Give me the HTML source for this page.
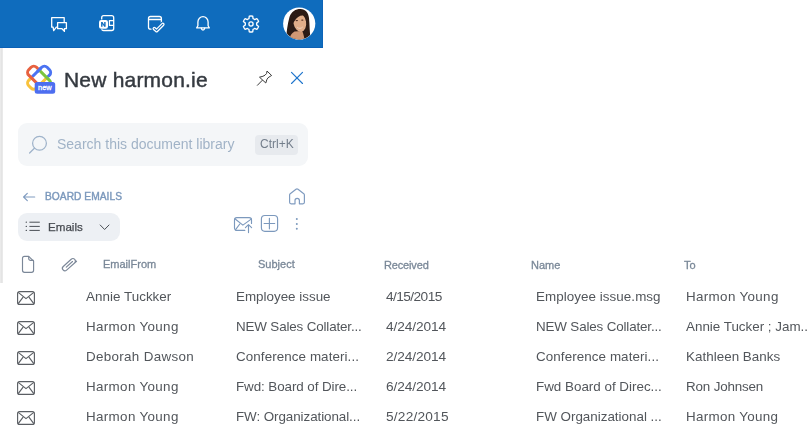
<!DOCTYPE html>
<html><head><meta charset="utf-8">
<style>
html,body{margin:0;padding:0;background:#fff;width:809px;height:440px;overflow:hidden;position:relative;font-family:"Liberation Sans",sans-serif;}
.a{position:absolute;white-space:nowrap;line-height:1;will-change:transform;}
svg{position:absolute;overflow:visible;}
#bar{position:absolute;left:0;top:0;width:322px;height:47px;background:#0f6cbd;border-right:1px solid #0c64b8;border-bottom:1px solid #0a60b6;}
#lline{position:absolute;left:0;top:48px;width:3px;height:235px;background:linear-gradient(to right,#ededed 0px,#e4e4e4 1.5px,#e9e9e9 2.5px,#f3f3f3 3px);}
.row{color:#52565b;font-size:13.4px;margin-top:-0.4px;}
.dt{font-size:13.7px;margin-top:0px;}
.hd{color:#7a8898;font-size:11px;-webkit-text-stroke:0.3px #7a8898;}
</style></head><body>
<div id="bar"></div>
<div id="lline"></div>

<!-- top bar icons -->
<svg width="809" height="48" style="left:0;top:0" fill="none" stroke="#fff" stroke-width="1.3" stroke-linejoin="round" stroke-linecap="round">
  <!-- chat -->
  <path d="M64.2,21.6 V17.7 H51.7 V27.2 H53.1 L53.7,30.6 L56.3,27.2 H57.5"/>
  <path d="M62,28.7 H57.6 V22.6 H66.4 V28.7 H64.4 V31.4 Z"/>
  <!-- onenote -->
  <rect x="101.7" y="15.7" width="12" height="14.8" rx="2"/>
  <path d="M109.4,20.6 H113.5 M109.4,20.6 V25.4 H113.5"/>
  <rect x="98.6" y="19.6" width="9.8" height="9.6" rx="2.4" fill="#0f6cbd" stroke="none"/>
  <rect x="99" y="20" width="9" height="8.8" rx="2.2" fill="#fff" stroke="none"/>
  <path d="M101.1,26.7 V22 H102.5 L104.2,24.7 V22 H105.6 V26.7 H104.2 L102.5,24 V26.7 Z" fill="#0f6cbd" stroke="none"/>
  <!-- calendar check -->
  <path d="M153,29.2 H150.5 A2,2 0 0 1 148.5,27.2 V18.5 A2,2 0 0 1 150.5,16.5 H159.4 A2,2 0 0 1 161.4,18.5 V23.5"/>
  <path d="M148.6,19.5 H161.3"/>
  <path d="M154.3,28.6 L156.6,30.7 L162.8,24.4" stroke="#0f6cbd" stroke-width="5.6"/>
  <path d="M154.3,28.6 L156.6,30.7 L162.8,24.4" stroke-width="3.6"/>
  <path d="M154.3,28.6 L156.6,30.7 L162.8,24.4" stroke="#0f6cbd" stroke-width="1.1"/>
  <!-- bell -->
  <path d="M197.9,25.8 V21.9 A5.1,5.2 0 0 1 208.1,21.9 V25.8 L209.3,27.9 H196.7 Z"/>
  <path d="M201.3,28.2 A1.75,2.5 0 0 0 204.7,28.2"/>
  <!-- gear -->
  <path d="M248.96,18.68 L249.27,16.19 A8.0,8.0 0 0 1 252.73,16.19 L253.04,18.68 A5.7,5.7 0 0 1 254.59,19.57 L256.90,18.60 A8.0,8.0 0 0 1 258.63,21.59 L256.63,23.11 A5.7,5.7 0 0 1 256.63,24.89 L258.63,26.41 A8.0,8.0 0 0 1 256.90,29.40 L254.59,28.43 A5.7,5.7 0 0 1 253.04,29.32 L252.73,31.81 A8.0,8.0 0 0 1 249.27,31.81 L248.96,29.32 A5.7,5.7 0 0 1 247.41,28.43 L245.10,29.40 A8.0,8.0 0 0 1 243.37,26.41 L245.37,24.89 A5.7,5.7 0 0 1 245.37,23.11 L243.37,21.59 A8.0,8.0 0 0 1 245.10,18.60 L247.41,19.57 A5.7,5.7 0 0 1 248.96,18.68 Z"/>
  <circle cx="251" cy="24" r="2.1"/>
</svg>
<!-- avatar -->
<svg width="40" height="40" style="left:279px;top:4px" viewBox="279 4 40 40">
  <defs><clipPath id="cc"><circle cx="299.2" cy="23.6" r="15.9"/></clipPath></defs>
  <circle cx="299.2" cy="23.6" r="16.1" fill="#fff"/>
  <g clip-path="url(#cc)">
    <path d="M286,40 C286.5,32 287.5,24 289.5,17 C291.5,11.5 295.5,9 300.5,9 C305.5,9.2 308.3,12.5 309,18 C309.8,25 309.3,32 311,40 Z" fill="#2b1b15"/>
    <path d="M289,40 C290,36 291.5,33 294.5,31.5 L302,31 C303.5,33 304,37 304.5,40 Z" fill="#cf9874"/>
    <ellipse cx="299.8" cy="22.6" rx="6.3" ry="9.3" transform="rotate(-10 299.8 22.6)" fill="#e0ad89"/>
    <path d="M292.3,24 C292,17 295,12.5 301,12 C304.5,12 306.5,14 307,17 C303,14.2 298,15 294.2,21.5 Z" fill="#2b1b15"/>
    <ellipse cx="296.8" cy="20.6" rx="1.3" ry="0.7" fill="#4a2a20"/>
    <ellipse cx="302.3" cy="20.1" rx="1.2" ry="0.7" fill="#4a2a20"/>
    <path d="M297.2,27.4 C298.8,28.8 301.2,28.7 302.8,26.9" stroke="#efd5c4" stroke-width="0.9" fill="none"/>
  </g>
</svg>

<!-- logo -->
<svg width="60" height="40" style="left:0;top:60px" viewBox="0 60 60 40" fill="none" stroke-width="3">
  <defs>
    <clipPath id="cL"><rect x="0" y="60" width="39.1" height="40"/></clipPath>
    <clipPath id="cR"><rect x="39.1" y="60" width="30" height="40"/></clipPath>
    <clipPath id="cT"><rect x="0" y="60" width="60" height="17.6"/></clipPath>
    <clipPath id="cB"><rect x="0" y="77.6" width="60" height="30"/></clipPath>
    <clipPath id="cC1"><circle cx="39.1" cy="69.9" r="3"/></clipPath>
  </defs>
  <g clip-path="url(#cB)"><rect transform="translate(39.1 77.7) rotate(-45)" x="-13" y="-5.5" width="26" height="11" rx="3.8" stroke="#f9c23c"/></g>
  <g clip-path="url(#cT)"><rect transform="translate(39.1 77.7) rotate(-45)" x="-13" y="-5.5" width="26" height="11" rx="3.8" stroke="#4b73f2"/></g>
  <g clip-path="url(#cL)"><rect transform="translate(39.1 77.7) rotate(45)" x="-13" y="-5.5" width="26" height="11" rx="3.8" stroke="#e8613f"/></g>
  <g clip-path="url(#cR)"><rect transform="translate(39.1 77.7) rotate(45)" x="-13" y="-5.5" width="26" height="11" rx="3.8" stroke="#7ac43e"/></g>
  <g clip-path="url(#cC1)"><rect transform="translate(39.1 77.7) rotate(-45)" x="-13" y="-5.5" width="26" height="11" rx="3.8" stroke="#4b73f2"/></g>
  <rect x="34.7" y="81.9" width="20.5" height="11.8" rx="2.5" fill="#4d6ef0" stroke="none"/>
  <text x="44.8" y="90" font-family="Liberation Sans" font-size="7.4" fill="#fff" stroke="#fff" stroke-width="0.3" text-anchor="middle">new</text>
</svg>

<div class="a" style="left:64.3px;top:69px;font-size:21px;color:#353a40;-webkit-text-stroke:0.45px #353a40;letter-spacing:0.2px;">New harmon.ie</div>

<!-- pin -->
<svg width="30" height="30" style="left:250px;top:65px" viewBox="250 65 30 30" fill="none" stroke="#3a3a3a" stroke-width="1" stroke-linejoin="round" stroke-linecap="round">
  <path d="M262.2,80.4 L257.4,85.3"/>
  <path d="M267.3,71.3 L271.6,75.5 L270.1,76.4 Q267.7,77.4 266.8,79.7 L265.8,83 L259.5,77.2 L262.9,76.3 Q265.3,75.5 266.4,73.8 Z"/>
</svg>
<!-- close -->
<svg width="30" height="30" style="left:282px;top:62px" viewBox="282 62 30 30" fill="none" stroke="#1f75cc" stroke-width="1.15" stroke-linecap="round">
  <path d="M291.5,72.3 L302.5,83.5 M302.5,72.3 L291.5,83.5"/>
</svg>

<!-- search -->
<div style="position:absolute;left:18px;top:123px;width:290px;height:43px;border-radius:9px;background:#f4f6f8;"></div>
<svg width="30" height="30" style="left:25px;top:130px" viewBox="25 130 30 30" fill="none" stroke="#9fb3ca" stroke-width="1.25" stroke-linecap="round">
  <circle cx="39.5" cy="143.3" r="6.9"/>
  <path d="M34.4,148.2 L29.6,153"/>
</svg>
<div class="a" style="left:57px;top:137px;font-size:14px;color:#a1b3c7;">Search this document library</div>
<div style="position:absolute;left:255px;top:135px;width:43px;height:20px;border-radius:4px;background:#e7eaee;"></div>
<div class="a" style="left:259.5px;top:137.8px;font-size:12px;color:#737e8b;">Ctrl+K</div>

<!-- breadcrumb -->
<svg width="20" height="20" style="left:20px;top:187px" viewBox="20 187 20 20" fill="none" stroke="#809cc0" stroke-width="1.2" stroke-linecap="round" stroke-linejoin="round">
  <path d="M23.6,197 H34.7 M27.3,193.3 L23.6,197 L27.3,200.7"/>
</svg>
<div class="a" style="left:45.4px;top:191.6px;font-size:10.2px;color:#7b98bc;-webkit-text-stroke:0.4px #7b98bc;letter-spacing:0.05px;">BOARD EMAILS</div>
<!-- home -->
<svg width="20" height="20" style="left:287px;top:186px" viewBox="287 186 20 20" fill="none" stroke="#809cc0" stroke-width="1.2" stroke-linejoin="round">
  <path d="M289.6,202.3 V195 A1.6,1.6 0 0 1 290.2,193.8 L296,189.3 A1.6,1.6 0 0 1 298,189.3 L303.8,193.8 A1.6,1.6 0 0 1 304.4,195 V202.3 A1.5,1.5 0 0 1 302.9,203.8 H299.4 V200.6 A2.2,2.2 0 0 0 295,200.6 V203.8 H291.1 A1.5,1.5 0 0 1 289.6,202.3 Z"/>
</svg>

<!-- dropdown -->
<div style="position:absolute;left:18px;top:213px;width:102px;height:28px;border-radius:9px;background:#edf0f4;"></div>
<svg width="20" height="20" style="left:22px;top:217px" viewBox="22 217 20 20" fill="none" stroke="#4a4f55" stroke-width="1" stroke-linecap="round">
  <path d="M29.8,222.2 H39.4 M29.8,226.4 H39.4 M29.8,230.4 H39.4"/>
  <path d="M26.2,222.2 h0.2 M26.2,226.4 h0.2 M26.2,230.4 h0.2" stroke-width="1.2"/>
</svg>
<div class="a" style="left:48.2px;top:221.2px;font-size:11.6px;color:#464a50;-webkit-text-stroke:0.25px #464a50;">Emails</div>
<svg width="20" height="20" style="left:95px;top:218px" viewBox="95 218 20 20" fill="none" stroke="#4a4f55" stroke-width="1" stroke-linecap="round" stroke-linejoin="round">
  <path d="M100.2,225 L104.6,229.5 L109,225"/>
</svg>

<!-- toolbar icons -->
<svg width="80" height="30" style="left:230px;top:210px" viewBox="230 210 80 30" fill="none" stroke="#7c99bd" stroke-width="1.15" stroke-linecap="round" stroke-linejoin="round">
  <path d="M244.8,230.4 H236.8 A2.3,2.3 0 0 1 234.5,228.1 V219.9 A2.3,2.3 0 0 1 236.8,217.6 H249.2 A2.3,2.3 0 0 1 251.5,219.9 V223.4"/>
  <path d="M235.2,219 L242.9,225.1 L251.2,219.1"/>
  <path d="M235.6,229.6 L239.8,224"/>
  <path d="M248.5,232.6 V224.7 M245.4,227.6 L248.5,224.7 L251.6,227.6"/>
  <rect x="261.4" y="215.5" width="16.2" height="15.8" rx="3.5"/>
  <path d="M269.4,218.2 V228.8 M264.1,223.5 H274.7"/>
  <circle cx="296.8" cy="219.1" r="1" fill="#7c99bd" stroke="none"/>
  <circle cx="296.8" cy="223.9" r="1" fill="#7c99bd" stroke="none"/>
  <circle cx="296.8" cy="228.7" r="1" fill="#7c99bd" stroke="none"/>
</svg>

<!-- header -->
<svg width="80" height="30" style="left:15px;top:250px" viewBox="15 250 80 30" fill="none" stroke="#7b8798" stroke-width="1.15" stroke-linejoin="round" stroke-linecap="round">
  <path d="M28.7,256.4 H24.5 A2,2 0 0 0 22.5,258.4 V270.3 A2,2 0 0 0 24.5,272.3 H31.6 A2,2 0 0 0 33.6,270.3 V261.2 Z"/>
  <path d="M28.7,256.6 V258.6 A1.8,1.8 0 0 0 30.5,260.4 H33.4"/>
  <g transform="translate(69.2 265) rotate(-42)">
    <path d="M8,2.1 H-5.4 A2.5,2.5 0 0 1 -5.4,-2.9 H5.3 A2.5,2.5 0 0 1 5.3,2.1"/>
    <path d="M4.8,-0.4 H-3.6"/>
  </g>
</svg>
<div class="a hd" style="left:102.5px;top:259px;">EmailFrom</div>
<div class="a hd" style="left:258px;top:259px;">Subject</div>
<div class="a hd" style="left:384.2px;top:260px;letter-spacing:-0.15px;">Received</div>
<div class="a hd" style="left:530.8px;top:260px;">Name</div>
<div class="a hd" style="left:684px;top:260px;">To</div>

<!-- rows -->
<svg width="40" height="150" style="left:0;top:285px" viewBox="0 285 40 150" fill="none" stroke="#5a5e63" stroke-width="1.15" stroke-linejoin="round">
  <defs><g id="env">
    <rect x="17.6" y="291.6" width="16.8" height="12.8" rx="2"/>
    <path d="M18.2,292.4 L26,298.6 L33.8,292.4 M18.2,303.6 L23.1,297.1 M33.8,303.6 L28.9,297.1"/>
  </g></defs>
  <use href="#env"/>
  <use href="#env" y="30"/>
  <use href="#env" y="60"/>
  <use href="#env" y="90"/>
  <use href="#env" y="120"/>
</svg>

<div class="a row" style="left:86.00px;top:290px;letter-spacing:0.036px;">Annie Tuckker</div>
<div class="a row" style="left:236.00px;top:290px;letter-spacing:0.001px;">Employee issue</div>
<div class="a row dt" style="left:386.00px;top:290px;letter-spacing:-0.575px;">4/15/2015</div>
<div class="a row" style="left:536.00px;top:290px;letter-spacing:0.059px;">Employee issue.msg</div>
<div class="a row" style="left:686.00px;top:290px;letter-spacing:0.342px;">Harmon Young</div>

<div class="a row" style="left:86.00px;top:320px;letter-spacing:0.342px;">Harmon Young</div>
<div class="a row" style="left:236.00px;top:320px;letter-spacing:-0.150px;">NEW Sales Collater...</div>
<div class="a row dt" style="left:386.00px;top:320px;letter-spacing:-0.094px;">4/24/2014</div>
<div class="a row" style="left:536.00px;top:320px;letter-spacing:-0.150px;">NEW Sales Collater...</div>
<div class="a row" style="left:686.00px;top:320px;letter-spacing:0.000px;">Annie Tucker ; Jam...</div>

<div class="a row" style="left:86.00px;top:350px;letter-spacing:0.321px;">Deborah Dawson</div>
<div class="a row" style="left:236.00px;top:350px;letter-spacing:0.085px;">Conference materi...</div>
<div class="a row dt" style="left:386.00px;top:350px;letter-spacing:-0.094px;">2/24/2014</div>
<div class="a row" style="left:536.00px;top:350px;letter-spacing:0.085px;">Conference materi...</div>
<div class="a row" style="left:686.00px;top:350px;letter-spacing:0.032px;">Kathleen Banks</div>

<div class="a row" style="left:86.00px;top:380px;letter-spacing:0.342px;">Harmon Young</div>
<div class="a row" style="left:236.00px;top:380px;letter-spacing:-0.080px;">Fwd: Board of Dire...</div>
<div class="a row dt" style="left:386.00px;top:380px;letter-spacing:-0.094px;">6/24/2014</div>
<div class="a row" style="left:536.00px;top:380px;letter-spacing:0.000px;">Fwd Board of Direc...</div>
<div class="a row" style="left:686.00px;top:380px;letter-spacing:-0.160px;">Ron Johnsen</div>

<div class="a row" style="left:86.00px;top:410px;letter-spacing:0.342px;">Harmon Young</div>
<div class="a row" style="left:236.00px;top:410px;letter-spacing:-0.070px;">FW: Organizational...</div>
<div class="a row dt" style="left:386.00px;top:410px;letter-spacing:0.200px;">5/22/2015</div>
<div class="a row" style="left:536.00px;top:410px;letter-spacing:0.000px;">FW Organizational ...</div>
<div class="a row" style="left:686.00px;top:410px;letter-spacing:0.295px;">Harmon Young</div>

</body></html>
